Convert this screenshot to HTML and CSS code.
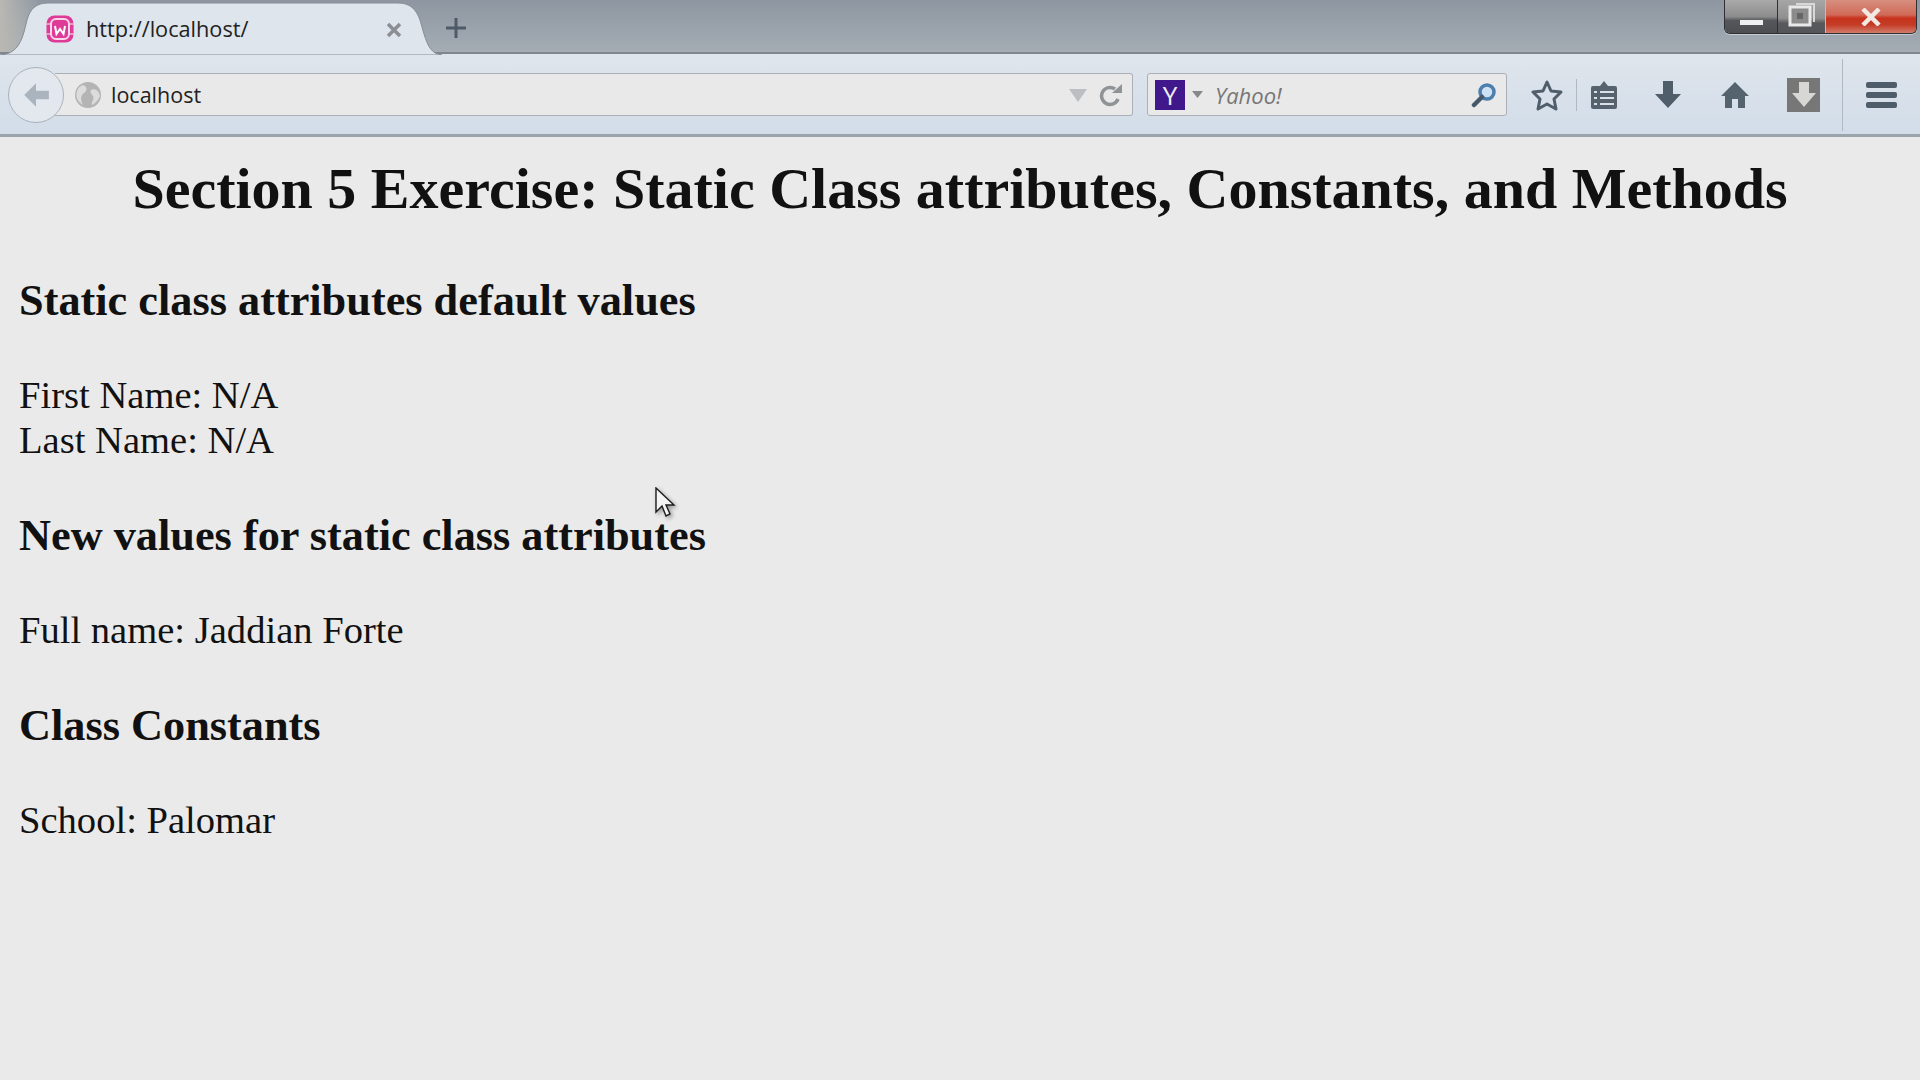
FILE: index.html
```html
<!doctype html>
<html>
<head>
<title>Section 5 Exercise</title>
<link rel="stylesheet" href="styles.css">
</head>
<body>
<div class="titlebar">
  <div class="tab">
    <svg class="tabshape" width="442" height="55" viewBox="0 0 442 55"><path d="M0 55C14 54 20 46 24 32L27 20C30 9 36 3 48 3H398C410 3 416 9 420 20L424 34C428 47 432 54 442 55Z" fill="#dfe5ec" stroke="#868d95" stroke-width="1"/></svg>
    <svg class="favicon" width="28" height="28" viewBox="0 0 28 28"><rect x="0.500" y="0.500" width="27" height="27" rx="8" fill="#de3b98"/><path d="M0 9H4M24 9H28M0 19H4M24 19H28" stroke="#f5b5d6" stroke-width="1.500"/><rect x="5" y="4" width="18" height="20" rx="5" fill="none" stroke="#f9d7e9" stroke-width="2"/><path d="M9 11L10.500 19L14 14L17.500 19L19 11" fill="none" stroke="#fff" stroke-width="2"/></svg>
    <span class="tabtitle">http://localhost/</span>
    <svg class="tabclose" width="16" height="16" viewBox="0 0 16 16"><path d="M2 2L14 14M14 2L2 14" stroke="#8b8f94" stroke-width="3.500"/></svg>
  </div>
  <svg class="newtab" width="20" height="20" viewBox="0 0 20 20"><path d="M10 0V20M0 10H20" stroke="#4f5b68" stroke-width="3"/></svg>
  <div class="winbtns">
    <div class="winbtn minbtn"><i class="minbar"></i></div>
    <div class="winbtn maxbtn">
      <svg width="28" height="27" viewBox="0 0 28 27"><path d="M8 4H26V22" fill="none" stroke="#d8d8d8" stroke-width="2"/><rect x="2" y="7" width="20" height="18" fill="#8b8b8b" stroke="#e8e8e8" stroke-width="3"/><rect x="9" y="13" width="6" height="6" fill="#666"/></svg>
    </div>
    <div class="winbtn closebtn">
      <svg width="22" height="18" viewBox="0 0 22 18"><path d="M3 1L19 17M19 1L3 17" stroke="#f3e9e4" stroke-width="4.500"/></svg>
    </div>
  </div>
</div>
<div class="navbar">
  <div class="back">
    <svg width="30" height="30" viewBox="0 0 28 28"><path d="M14 3L3 14L14 25V18H26V10H14Z" fill="#aab4bf"/></svg>
  </div>
  <div class="urlbar">
    <svg class="globe" width="26" height="26" viewBox="0 0 26 26"><circle cx="13" cy="13" r="13" fill="#b4b4b4"/><path d="M8 3C13 5 12 9 9 11C6 13 5 17 8 23C3 20 0 15 2 9C3 6 5 4 8 3ZM16 8C20 6 24 9 25 14C23 19 19 22 17 23C16 19 20 17 18 14C16 12 15 10 16 8Z" fill="#dcdcdc"/></svg>
    <span class="urltext">localhost</span>
    <svg class="dropmark" width="20" height="14" viewBox="0 0 20 14"><path d="M1 1H19L10 14Z" fill="#bcbfc2"/></svg>
    <svg class="reload" width="24" height="24" viewBox="0 0 24 24"><path d="M19 16A8.500 8.500 0 1 1 16 6" fill="none" stroke="#8f9396" stroke-width="3.500"/><path d="M13 10H23V1Z" fill="#8f9396"/></svg>
  </div>
  <div class="searchbar">
    <span class="yahoo">Y</span>
    <svg class="ydrop" width="11" height="7" viewBox="0 0 11 7"><path d="M0 0H11L5.500 7Z" fill="#85888c"/></svg>
    <span class="searchtext">Yahoo!</span>
    <svg class="lens" width="26" height="26" viewBox="0 0 26 26"><circle cx="16" cy="10" r="7" fill="#cfe2f5" stroke="#4d7fae" stroke-width="3.500"/><path d="M11 15L3 23" stroke="#47586b" stroke-width="4.500" stroke-linecap="round"/></svg>
  </div>
  <div class="tools">
    <svg class="tool-star" width="32" height="32" viewBox="0 0 32 32"><path d="M16 3L20 12L30 13L23 20L25 30L16 25L7 30L9 20L2 13L12 12Z" fill="none" stroke="#505d6b" stroke-width="3" stroke-linejoin="round"/></svg>
    <i class="sep"></i>
    <svg class="tool-list" width="28" height="30" viewBox="0 0 28 30"><path d="M3 6H10L14 1L18 6H25Q27 6 27 8V27Q27 29 25 29H3Q1 29 1 27V8Q1 6 3 6Z" fill="#56636f"/><path d="M4 12H7M10 12H24M4 18H7M10 18H24M4 24H7M10 24H24" stroke="#d8e0e8" stroke-width="2"/></svg>
    <svg class="tool-down" width="28" height="28" viewBox="0 0 28 28"><path d="M9 0H19V13H27L14 27L1 13H9Z" fill="#505d6b"/></svg>
    <svg class="tool-home" width="30" height="28" viewBox="0 0 30 28"><path d="M15 1L29 15H25V27H18V18H12V27H5V15H1Z" fill="#55636f"/></svg>
    <div class="tool-box"><svg width="24" height="26" viewBox="0 0 24 26"><path d="M7 0H17V11H24L12 25L0 11H7Z" fill="#d7d7d5"/></svg></div>
    <i class="sep sep-tall"></i>
    <div class="tool-menu"><i></i><i></i><i></i></div>
  </div>
</div>
<div class="page">
  <h1>Section 5 Exercise: Static Class attributes, Constants, and Methods</h1>
  <h3>Static class attributes default values</h3>
  <p>First Name: N/A<br>Last Name: N/A</p>
  <h3>New values for static class attributes</h3>
  <p>Full name: Jaddian Forte</p>
  <h3>Class Constants</h3>
  <p>School: Palomar</p>
</div>
<svg class="cursor" width="22" height="32" viewBox="0 0 22 32"><path d="M2 1V25L8 19L12 29L16 27L12 18H20Z" fill="#f4f4f4" stroke="#1c1c1c" stroke-width="1.400"/></svg>
</body>
</html>
```
FILE: styles.css
```css
html,body{
margin:0;
height:100%;
}
body{
background:#eaeaea;
color:#111;
font-family:"Liberation Serif",serif;
overflow:hidden;
position:relative;
}
i{
display:block;
}
.titlebar{
height:54px;
box-sizing:border-box;
border-bottom:2px solid #7f8890;
display:flex;
align-items:flex-start;
background:linear-gradient(90deg,#b9b8b3 0,rgba(185,184,179,0) 40px),linear-gradient(#8e97a1,#a4adb4);
position:relative;
}
.tab{
width:441px;
height:55px;
position:relative;
display:flex;
align-items:center;
z-index:1;
flex:none;
}
.tabshape{
position:absolute;
left:0;
top:0;
}
.favicon{
position:relative;
margin-left:46px;
margin-top:3px;
}
.tabtitle{
position:relative;
margin-left:12px;
font:21.700px "Open Sans",sans-serif;
color:#222;
margin-top:2px;
}
.tabclose{
position:relative;
margin-left:auto;
margin-right:39px;
margin-top:4px;
}
.newtab{
margin:18px 0 0 5px;
}
.winbtns{
margin-left:auto;
margin-right:3px;
height:33px;
display:flex;
border:1px solid #2e3134;
border-top:0;
border-radius:0 0 6px 6px;
box-shadow:0 1px 0 #c5cbd0;
overflow:hidden;
}
.winbtn{
display:flex;
align-items:center;
justify-content:center;
box-sizing:border-box;
}
.minbtn{
width:53px;
background:linear-gradient(#aaa,#8c8c8c 50%,#55575c 62%,#4c4e52);
border-right:1px solid #2e3134;
align-items:flex-end;
padding-bottom:8px;
}
.minbar{
width:23px;
height:5px;
background:#f0f0f0;
}
.maxbtn{
width:48px;
background:linear-gradient(#a6a6a6,#8f8f8f 55%,#58595b 70%,#55565a);
border-right:1px solid #e8b0a0;
align-items:flex-start;
}
.closebtn{
width:90px;
background:linear-gradient(#d88f80,#d06a58 45%,#c8321c 55%,#c43c26 75%,#d27c6c);
}
.navbar{
height:83px;
box-sizing:border-box;
padding-top:1px;
border-bottom:3px solid #9ba4ad;
background:linear-gradient(#dfe5ec,#d2dde9);
display:flex;
align-items:center;
padding-left:8px;
}
.back{
width:56px;
height:56px;
box-sizing:border-box;
border:1px solid #a9b2bb;
border-radius:50%;
background:#e3e8ee;
display:flex;
align-items:center;
justify-content:center;
position:relative;
z-index:1;
flex:none;
}
.urlbar{
width:1078px;
height:43px;
margin-left:-9px;
box-sizing:border-box;
border:1px solid #aab0b6;
border-left:0;
border-radius:0 3px 3px 0;
background:#e9e9e9;
display:flex;
align-items:center;
padding-left:20px;
flex:none;
}
.urltext{
font:21.500px "Open Sans",sans-serif;
color:#222;
margin-left:10px;
}
.dropmark{
margin-left:auto;
}
.reload{
margin:0 9px 0 11px;
}
.searchbar{
width:360px;
height:43px;
margin-left:14px;
box-sizing:border-box;
border:1px solid #aab0b6;
border-radius:3px;
background:#e9e9e9;
display:flex;
align-items:center;
padding-left:7px;
flex:none;
}
.yahoo{
width:30px;
height:30px;
background:#40188c;
color:#eee;
font:26px/30px "Open Sans",sans-serif;
text-align:center;
}
.ydrop{
margin-left:7px;
}
.searchtext{
margin-left:12px;
font:italic 22px "Open Sans",sans-serif;
color:#777;
}
.lens{
margin-left:auto;
margin-right:9px;
}
.tools{
display:flex;
align-items:center;
margin-left:24px;
height:100%;
flex:none;
}
.sep{
width:1px;
height:32px;
background:#b0b8c0;
margin:0 13px;
}
.sep-tall{
height:72px;
margin:0 23px 0 22px;
}
.tool-down{
margin-left:36px;
}
.tool-home{
margin-left:38px;
}
.tool-box{
width:33px;
height:34px;
margin-left:37px;
background:#777;
display:flex;
align-items:center;
justify-content:center;
}
.tool-menu{
width:31px;
display:flex;
flex-direction:column;
gap:4px;
}
.tool-menu i{
height:6px;
border-radius:2px;
background:#4f5c69;
}
.page{
padding:0 19px;
}
h1{
font-size:58px;
line-height:62px;
text-align:center;
margin:21px 0 57px;
}
h3{
font-size:44.300px;
line-height:48px;
margin:49px 0 0;
}
p{
font-size:38.600px;
line-height:45px;
margin:48px 0 0;
}
.cursor{
position:absolute;
left:654px;
top:487px;
filter:drop-shadow(2px 2px 2px rgba(0,0,0,0.35));
}
```
